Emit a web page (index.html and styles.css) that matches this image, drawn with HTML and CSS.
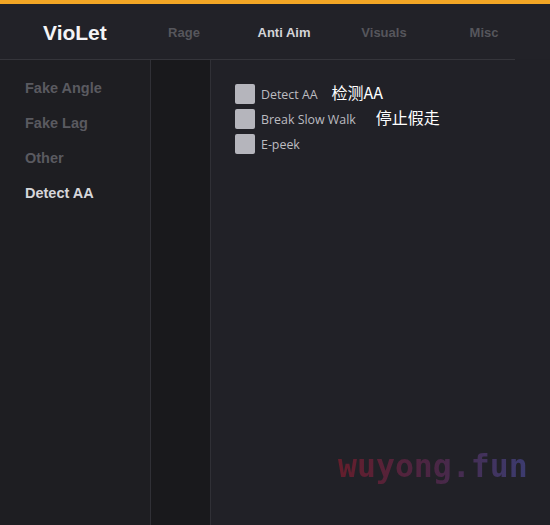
FILE: index.html
```html
<!DOCTYPE html>
<html lang="en">
<head>
<meta charset="utf-8">
<title>VioLet</title>
<link rel="stylesheet" href="styles.css">
</head>
<body>
<div class="app">
  <div class="accent"></div>
  <header class="header">
    <div class="logo">VioLet</div>
    <nav class="tabs">
      <span class="tab">Rage</span>
      <span class="tab active">Anti Aim</span>
      <span class="tab">Visuals</span>
      <span class="tab">Misc</span>
    </nav>
  </header>
  <div class="rule"></div>
  <div class="body">
    <aside class="sidebar">
      <div class="side-item">Fake Angle</div>
      <div class="side-item">Fake Lag</div>
      <div class="side-item">Other</div>
      <div class="side-item active">Detect AA</div>
    </aside>
    <div class="subcol"></div>
    <main class="main">
      <div class="row"><span class="box"></span><span class="label">Detect AA</span><span class="note note-a">检测AA</span></div>
      <div class="row"><span class="box"></span><span class="label">Break Slow Walk</span><span class="note note-b">停止假走</span></div>
      <div class="row"><span class="box"></span><span class="label">E-peek</span></div>
      <div class="watermark">wuyong.fun</div>
    </main>
  </div>
</div>
</body>
</html>
```
FILE: styles.css
```css
html, body {
  margin: 0;
  padding: 0;
  background: #212127;
}
.app {
  width: 550px;
  height: 525px;
  display: flex;
  flex-direction: column;
  font-family: "Liberation Sans", Arial, sans-serif;
  overflow: hidden;
}
.accent {
  height: 4px;
  background: #f2a625;
}
.header {
  height: 55px;
  background: #222228;
  display: flex;
  align-items: center;
}
.logo {
  width: 134px;
  box-sizing: border-box;
  padding-left: 43px;
  padding-top: 3px;
  font-size: 21px;
  font-weight: bold;
  color: #f4f4f6;
}
.tabs {
  display: grid;
  grid-template-columns: repeat(4, 100px);
  padding-top: 2px;
}
.tab {
  text-align: center;
  font-size: 13px;
  font-weight: bold;
  color: #56565c;
}
.tab.active {
  color: #d4d4d8;
}
.rule {
  width: 515px;
  height: 1px;
  background: #35353b;
}
.body {
  flex: 1;
  display: flex;
}
.sidebar {
  width: 150px;
  background: #1e1e22;
  border-right: 1px solid #303036;
  padding-top: 18px;
  box-sizing: content-box;
}
.side-item {
  height: 35px;
  line-height: 20px;
  padding-left: 25px;
  font-size: 14.5px;
  font-weight: bold;
  color: #5a5a60;
}
.side-item.active {
  color: #d6d6da;
}
.subcol {
  width: 59px;
  background: #19191c;
  border-right: 1px solid #303036;
}
.main {
  flex: 1;
  position: relative;
  padding: 24px 0 0 24px;
  background: #212127;
}
.row {
  display: flex;
  align-items: center;
  height: 20px;
  margin-bottom: 5px;
}
.box {
  width: 20px;
  height: 20px;
  border-radius: 2px;
  background: #b5b5bc;
  flex: none;
}
.label {
  margin-left: 6px;
  font-family: "Open Sans", "Noto Sans", sans-serif;
  font-size: 12.4px;
  color: #bcbcc0;
}
.note {
  font-family: "Noto Sans CJK SC", "Noto Sans", sans-serif;
  font-size: 16px;
  color: #ffffff;
  position: relative;
  top: -2px;
}
.note-a { margin-left: 14px; }
.note-b { margin-left: 20px; }
.watermark {
  position: absolute;
  left: 127px;
  top: 386px;
  font-family: "DejaVu Sans Mono", monospace;
  font-weight: bold;
  font-size: 31.5px;
  line-height: 40px;
  background: linear-gradient(90deg, #641e2c 0%, #4a2644 50%, #3c3c70 100%);
  -webkit-background-clip: text;
  background-clip: text;
  color: transparent;
}
```
